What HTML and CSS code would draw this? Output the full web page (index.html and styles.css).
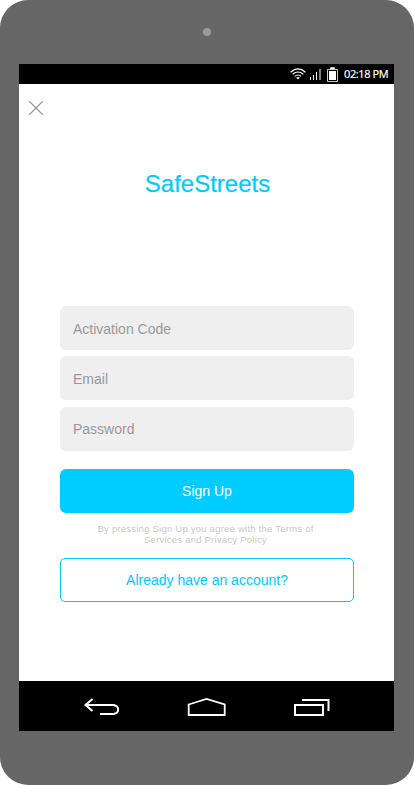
FILE: index.html
```html
<!DOCTYPE html>
<html lang="en">
<head>
<meta charset="utf-8">
<title>SafeStreets</title>
<link rel="stylesheet" href="styles.css">
</head>
<body>
<div class="device">
  <div class="bezel-top"><span class="camera"></span></div>
  <div class="screen">
    <div class="status">
      <svg class="wifi" width="16" height="12" viewBox="0 0 16 12" fill="none" stroke="#fff" stroke-width="1.2"><path d="M.6 4.2Q8-2.4 15.4 4.2M2.6 6.3q5.4-4.6 10.8 0M4.7 8.4q3.3-2.8 6.6 0"/><path d="M8 11.4L6.2 9.7q1.8-1.2 3.6 0z" fill="#fff" stroke="none"/></svg>
      <svg class="signal" width="11" height="12" viewBox="0 0 11 12" fill="#fff"><path d="M0 9h1v3H0zM3 7h1v5H3zM6 4h1v8H6zM9.500 1h1v11h-1z"/></svg>
      <svg class="battery" width="11" height="15" viewBox="0 0 11 15"><path d="M3.500 2V.5h4V2M.5 2.500h10v12H.5z" fill="none" stroke="#ccc"/><path d="M2 4h7v9H2zM4 1h3v1H4z" fill="#fff"/></svg>
      <span class="time">02:18 PM</span>
    </div>
    <main class="content">
      <svg class="close" width="14" height="14" viewBox="0 0 14 14" stroke="#8c8c8c" stroke-width="1.2"><path d="M.3.3l13.4 13.4M13.7.3L.3 13.7"/></svg>
      <h1 class="title">SafeStreets</h1>
      <form class="form">
        <input class="field" type="text" placeholder="Activation Code">
        <input class="field" type="email" placeholder="Email">
        <input class="field last" type="password" placeholder="Password">
        <button class="button primary" type="button">Sign Up</button>
        <p class="terms">By pressing Sign Up you agree with the Terms of<br>Services and Privacy Policy</p>
        <button class="button outline" type="button">Already have an account?</button>
      </form>
    </main>
    <nav class="navbar">
      <svg width="36" height="20" viewBox="0 0 36 20" fill="none" stroke="#fff" stroke-width="2"><path d="M8.500 2L1.500 8l7 6M1.500 8H30l2.500 1L34 11v3l-1.500 2-2.500 1H16"/></svg>
      <svg width="39" height="20" viewBox="0 0 39 20" fill="none" stroke="#fff" stroke-width="1.800"><path d="M1.700 7.500L19.500 2l18.200 5.500V18h-36z"/></svg>
      <svg width="37" height="20" viewBox="0 0 37 20" fill="none" stroke="#fff" stroke-width="2"><path d="M2 8h28v10H2zM9 3h26.500v11"/></svg>
    </nav>
  </div>
</div>
</body>
</html>
```
FILE: styles.css
```css
* {
  box-sizing: border-box;
}

body {
  margin: 0;
  background: #fff;
  font-family: "Liberation Sans", Arial, sans-serif;
}

.device {
  width: 414px;
  height: 785px;
  padding: 0 20px 0 19px;
  border-radius: 28px;
  background: #666;
}

.bezel-top {
  display: flex;
  justify-content: center;
  height: 64px;
  padding: 28px 0 0 1px;
}

.camera {
  width: 8px;
  height: 8px;
  border-radius: 50%;
  background: #999;
}

.screen {
  display: flex;
  flex-direction: column;
  height: 667px;
  background: #fff;
}

.status {
  display: flex;
  align-items: center;
  justify-content: flex-end;
  height: 20px;
  padding-right: 5px;
  background: #000;
}

.wifi {
  margin-right: 4px;
}

.signal {
  margin-right: 6px;
}

.battery {
  margin: 0 6px 0 0;
}

.time {
  width: 45px;
  color: #fff;
  font: 11px/20px "Open Sans", "Noto Sans", sans-serif;
  letter-spacing: -0.4px;
  white-space: nowrap;
  -webkit-text-stroke: 0.2px #fff;
}

.content {
  flex: 1;
  padding: 17px 40px 0 41px;
}

.close {
  display: block;
  margin-left: -31px;
}

.title {
  margin: 55px 0 108px;
  padding-left: 1px;
  color: #00c8fa;
  font-size: 24px;
  font-weight: 400;
  line-height: 28px;
  text-align: center;
  -webkit-text-stroke: 0.2px #00c8fa;
}

.form {
  display: flex;
  flex-direction: column;
}

.field {
  width: 100%;
  height: 44px;
  margin: 0 0 6px;
  padding: 2px 13px 0;
  border: 0;
  border-radius: 6px;
  background: #efefef;
  font: 14px "Liberation Sans", Arial, sans-serif;
}

.field::placeholder {
  color: #999;
  opacity: 1;
}

.last {
  margin: 1px 0 18px;
  padding-top: 0;
}

.button {
  height: 44px;
  padding: 0;
  border-radius: 6px;
  font: 14px "Liberation Sans", Arial, sans-serif;
}

.primary {
  border: 0;
  background: #0cf;
  color: #fff;
}

.terms {
  margin: 10px 0 13px;
  padding-right: 3px;
  color: #c8c8c8;
  font-size: 9.5px;
  letter-spacing: 0.23px;
  line-height: 11px;
  text-align: center;
}

.outline {
  border: 1px solid #00c8fa;
  border-radius: 5px;
  background: #fff;
  color: #00c8fa;
}

.navbar {
  display: flex;
  gap: 67px;
  height: 50px;
  padding: 16px 0 0 65px;
  background: #000;
}
```
